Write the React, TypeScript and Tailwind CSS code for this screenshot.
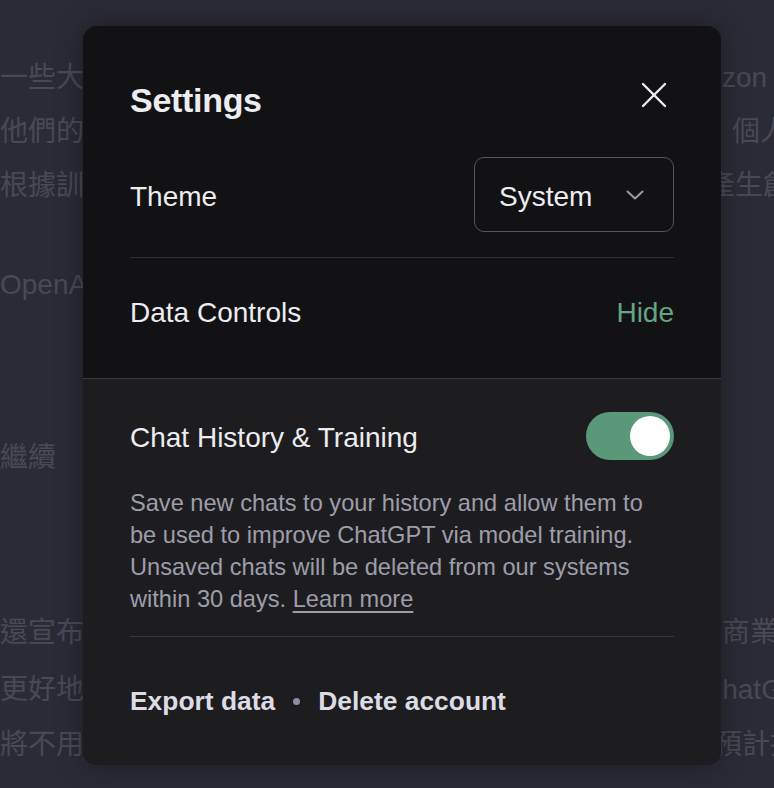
import type { ReactNode } from 'react'

function BgLine({ left, right, rightClass, className }: { left: ReactNode; right?: ReactNode; rightClass?: string; className?: string }) {
  return (
    <div className={`flex h-[54px] items-center whitespace-nowrap ${className ?? ''}`}>
      <span className="w-[722px] shrink-0 overflow-hidden">{left}</span>
      {right && <span className={rightClass}>{right}</span>}
    </div>
  )
}

function CloseIcon() {
  return (
    <svg width="26" height="26" viewBox="0 0 26 26" fill="none" stroke="#ececf1" strokeWidth="2.4" strokeLinecap="round">
      <path d="M2 2 24 24" />
      <path d="M24 2 2 24" />
    </svg>
  )
}

function Chevron() {
  return (
    <svg width="18" height="10" viewBox="0 0 18 10" fill="none" stroke="#9b9ba6" strokeWidth="2" strokeLinecap="round" strokeLinejoin="round">
      <path d="M1.5 1.5 9 8.5l7.5-7" />
    </svg>
  )
}

export default function App() {
  return (
    <div
      className="relative h-[788px] w-full overflow-hidden bg-[#2b2b36]"
      style={{ fontFamily: '"Liberation Sans", "Noto Sans CJK TC", sans-serif' }}
    >
      {/* chat text behind the dialog */}
      <div className="flex flex-col text-[28px] text-[#494955]">
        <BgLine className="mt-[51px]" left="一些大型科技公司，例如 Google、Microsoft 和 Ama" right="zon 等" rightClass="" />
        <BgLine left="他們的產品和服務中使用這些模型，並且收集使用者的" right="個人資料" rightClass="pl-[10px]" />
        <BgLine left="根據訓練資料中的模式與規律，這些模型可以" right="產生創作" rightClass="-ml-[15px]" />
        <BgLine className="mt-[45px]" left="OpenAI 也在這方面有許多研究與進展" />
        <BgLine className="mt-[119px]" left="繼續" />
        <BgLine className="mt-[121px]" left="還宣布將推出新的隱私控制功能，讓使用者和" right="商業用戶" rightClass="" />
        <BgLine className="mt-[3px]" left="更好地管理他們的資料，包括是否允許使用 C" right="ChatGPT" rightClass="-ml-[20px]" />
        <BgLine className="mt-[1px]" left="將不用於訓練模型，而這項新的功能" right="預計推出" rightClass="-ml-[8px]" />
      </div>

      {/* settings dialog */}
      <div className="absolute left-[83px] top-[26px] w-[638px] overflow-hidden rounded-[14px] bg-[#121214] shadow-[0_0_28px_rgba(0,0,0,0.35)]">
        <div className="px-[47px]">
          <div className="flex h-[48px] items-center justify-between mt-[50px]">
            <h2 className="text-[34px] font-bold tracking-[-0.3px] text-[#ececf1]">Settings</h2>
            <button className="mr-[7px] mb-[10px] flex items-center justify-center">
              <CloseIcon />
            </button>
          </div>

          <div className="flex items-center justify-between border-b border-[#2f2f35] pt-[33px] pb-[25px]">
            <span className="pt-[4px] text-[28px] leading-[32px] text-[#ececf1]">Theme</span>
            <div className="flex h-[75px] w-[200px] items-center justify-between rounded-[10px] border-[1.5px] border-[#55555d] pl-[24px] pr-[29px]">
              <span className="pt-[4px] text-[28px] leading-[32px] text-[#ececf1]">System</span>
              <Chevron />
            </div>
          </div>

          <div className="flex items-center justify-between pt-[39px] pb-[49px] text-[28px] leading-[32px]">
            <span className="text-[#ececf1]">Data Controls</span>
            <button className="text-[#65a383]">Hide</button>
          </div>
        </div>

        <div className="border-t border-[#38383d] bg-[#1d1d20] px-[47px]">
          <div className="flex h-[48px] items-center justify-between mt-[33px]">
            <span className="pt-[4px] text-[28px] leading-[32px] text-[#ececf1]">Chat History &amp; Training</span>
            <div className="flex h-[48px] w-[88px] items-center justify-end rounded-full bg-[#5a987a] pr-[4px]">
              <div className="h-[40px] w-[40px] rounded-full bg-white" />
            </div>
          </div>

          <div className="border-b border-[#36363b] pb-[21px]">
            <p className="mt-[27px] max-w-[528px] text-[23.6px] leading-[32px] text-[#9d9dab]">
              Save new chats to your history and allow them to be used to improve ChatGPT via model training. Unsaved chats
              will be deleted from our systems within 30 days.{' '}
              <a href="#" className="underline decoration-[1.5px] underline-offset-[4px]">
                Learn more
              </a>
            </p>
          </div>

          <div className="flex items-center pt-[48px] pb-[48px] text-[26.4px] leading-[32px] font-bold text-[#dcdce4]">
            <button>Export data</button>
            <span className="mx-[18px] h-[7px] w-[7px] rounded-full bg-[#8e8ea0]" />
            <button>Delete account</button>
          </div>
        </div>
      </div>
    </div>
  )
}
